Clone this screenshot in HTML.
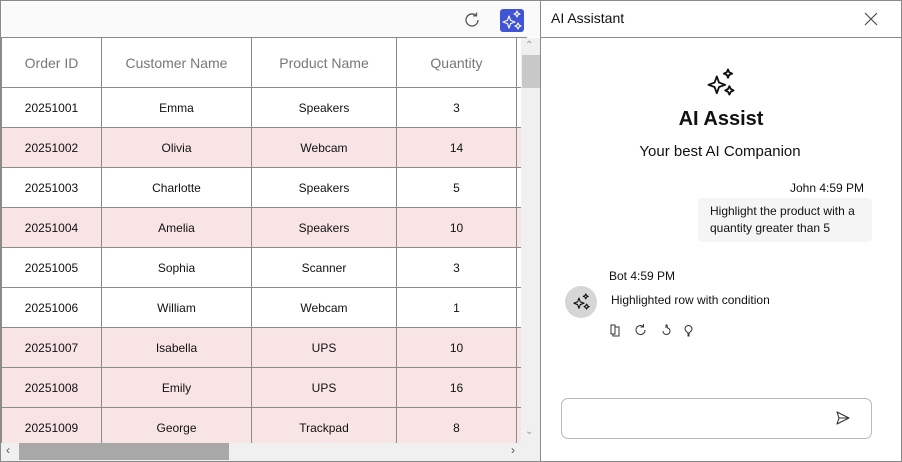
<!DOCTYPE html>
<html><head><meta charset="utf-8"><style>
*{box-sizing:border-box;margin:0;padding:0}
body{width:902px;height:462px;background:#fff;font-family:"Segoe UI","Liberation Sans",sans-serif;color:#111;position:relative;overflow:hidden}
.abs{position:absolute}
.frame{left:0;top:0;width:902px;height:462px;border:1px solid #8a8a8a}
table{border-collapse:collapse;table-layout:fixed;position:absolute;left:1px;top:37px}
td,th{border:1px solid #8a8a8a;text-align:center;font-size:12px;height:40px;font-weight:normal;overflow:hidden;white-space:nowrap}
th{height:50px;color:#777;font-size:14px}
tr.h td{background:#f8e4e4}
</style></head><body>
<svg width="0" height="0" style="position:absolute"><defs>
<g id="sp" fill="none" stroke-linejoin="round">
<path d="M7 6 L8.6 10.4 L13 12 L8.6 13.6 L7 18 L5.4 13.6 L1 12 L5.4 10.4Z"/>
<path d="M15 1 L15.9 3.1 L18 4 L15.9 4.9 L15 7 L14.1 4.9 L12 4 L14.1 3.1Z"/>
<path d="M16 13 L17 15 L19 16 L17 17 L16 19 L15 17 L13 16 L15 15Z"/>
</g></defs></svg>
<div class="abs" style="left:1px;top:1px;width:539px;height:36px;background:#fafafa"></div>
<svg class="abs" style="left:462px;top:10px" width="20" height="20" viewBox="0 0 20 20"><path d="M16 10a6 6 0 1 1-2-4.5" fill="none" stroke="#555" stroke-width="1.3"/><path d="M14.5 2.5v3.3h-3.3" fill="none" stroke="#555" stroke-width="1.3"/></svg>
<div class="abs" style="left:500px;top:9px;width:24px;height:23px;background:#4154d4;border-radius:3px"></div>
<svg class="abs" style="left:502px;top:10px" width="20" height="20" viewBox="0 0 20 20"><use href="#sp" stroke="#fff" stroke-width="1.1"/></svg>
<table>
<colgroup><col style="width:100px"><col style="width:150px"><col style="width:145px"><col style="width:120px"><col style="width:10px"></colgroup>
<tr><th>Order ID</th><th>Customer Name</th><th>Product Name</th><th>Quantity</th><th></th></tr>
<tr><td>20251001</td><td>Emma</td><td>Speakers</td><td>3</td><td></td></tr>
<tr class="h"><td>20251002</td><td>Olivia</td><td>Webcam</td><td>14</td><td></td></tr>
<tr><td>20251003</td><td>Charlotte</td><td>Speakers</td><td>5</td><td></td></tr>
<tr class="h"><td>20251004</td><td>Amelia</td><td>Speakers</td><td>10</td><td></td></tr>
<tr><td>20251005</td><td>Sophia</td><td>Scanner</td><td>3</td><td></td></tr>
<tr><td>20251006</td><td>William</td><td>Webcam</td><td>1</td><td></td></tr>
<tr class="h"><td>20251007</td><td>Isabella</td><td>UPS</td><td>10</td><td></td></tr>
<tr class="h"><td>20251008</td><td>Emily</td><td>UPS</td><td>16</td><td></td></tr>
<tr class="h"><td>20251009</td><td>George</td><td>Trackpad</td><td>8</td><td></td></tr>
</table>
<div class="abs" style="left:521px;top:38px;width:19px;height:405px;background:#f0f0f0"></div>
<div class="abs" style="left:522px;top:55px;width:18px;height:33px;background:#c8c8c8"></div>
<div class="abs" style="left:525px;top:40px;font-size:10px;color:#999">&#8963;</div>
<div class="abs" style="left:525px;top:426px;font-size:10px;color:#999">&#8964;</div>
<div class="abs" style="left:1px;top:443px;width:539px;height:18px;background:#f0f0f0"></div>
<div class="abs" style="left:19px;top:443px;width:210px;height:17px;background:#a8a8a8"></div>
<div class="abs" style="left:6px;top:443px;font-size:12px;color:#555">&#8249;</div>
<div class="abs" style="left:511px;top:443px;font-size:12px;color:#555">&#8250;</div>
<div class="abs" style="left:540px;top:0;width:1px;height:462px;background:#8a8a8a"></div>
<div class="abs" style="left:541px;top:37px;width:360px;height:1px;background:#8a8a8a"></div>
<div class="abs" style="left:551px;top:10px;font-size:14px">AI Assistant</div>
<svg class="abs" style="left:864px;top:12px" width="14" height="14"><path d="M1 1L13 13M13 1L1 13" stroke="#444" stroke-width="1.1"/></svg>
<svg class="abs" style="left:707px;top:68px" width="28" height="28" viewBox="0 0 20 20"><use href="#sp" stroke="#111" stroke-width="1.3"/></svg>
<div class="abs" style="left:541px;width:360px;top:108px;text-align:center;font-size:20px;font-weight:bold">AI Assist</div>
<div class="abs" style="left:541px;width:358px;top:143px;text-align:center;font-size:15px">Your best AI Companion</div>
<div class="abs" style="left:790px;top:181px;font-size:12px">John 4:59 PM</div>
<div class="abs" style="left:698px;top:198px;width:174px;height:44px;background:#f5f5f5;border-radius:4px;padding:5px 12px;font-size:12px;line-height:17px">Highlight the product with a quantity greater than 5</div>
<div class="abs" style="left:609px;top:269px;font-size:12px">Bot 4:59 PM</div>
<div class="abs" style="left:565px;top:286px;width:32px;height:32px;border-radius:50%;background:#d6d6d6"></div>
<svg class="abs" style="left:573px;top:293px" width="17" height="17" viewBox="0 0 20 20"><use href="#sp" stroke="#111" stroke-width="1.3"/></svg>
<div class="abs" style="left:611px;top:293px;font-size:12px">Highlighted row with condition</div>
<svg class="abs" style="left:609px;top:322px" width="90" height="16" viewBox="0 0 90 16">
<g fill="none" stroke="#333" stroke-width="1">
<path d="M2 3h4v9H2z M6 5h4v9H4v-2"/>
<path d="M36 8a4.5 4.5 0 1 1-1.5-3.3M34.5 2v3h-3"/>
<path d="M54 9a3.5 3.5 0 1 0 7 0c0-2-1.5-3-2.5-3l-0.5-3h-1l0 3"/>
<path d="M76 7a3.5 3.5 0 1 1 7 0c0 2-2 3-3 4v3h-1v-3c-1-1-3-2-3-4"/>
</g></svg>
<div class="abs" style="left:561px;top:398px;width:311px;height:41px;border:1px solid #b8b8b8;border-radius:7px"></div>
<svg class="abs" style="left:835px;top:410px" width="16" height="16" viewBox="0 0 16 16"><path d="M2 2L14 8L2 14L4 8Z M4 8h10" fill="none" stroke="#333" stroke-width="1.1" stroke-linejoin="round"/></svg>
<div class="abs frame"></div>
</body></html>
